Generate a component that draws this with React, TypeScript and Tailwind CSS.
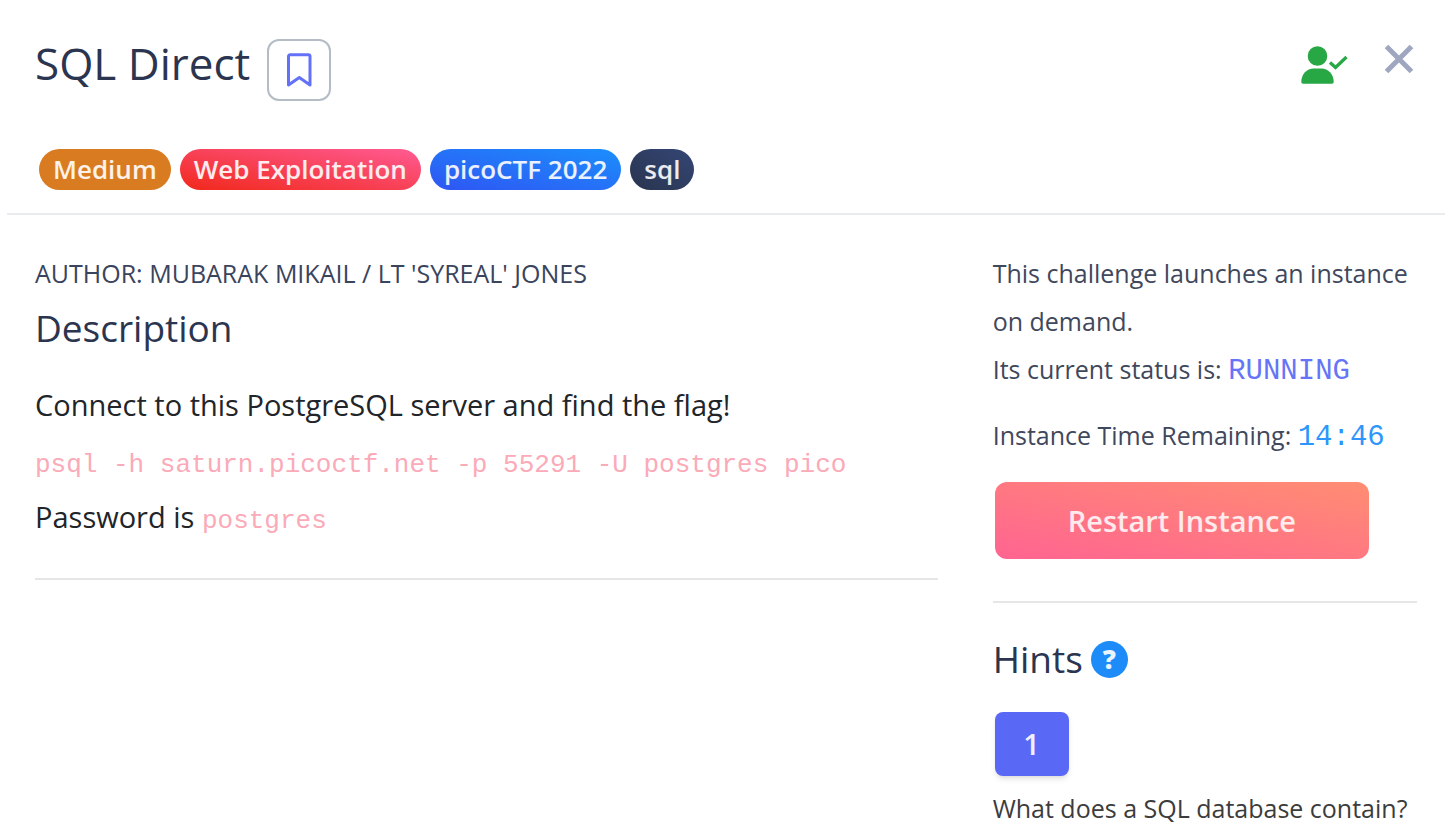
import React from "react";

const tags = [
  { label: "Medium", style: "bg-[#d97b20]" },
  { label: "Web Exploitation", style: "bg-[linear-gradient(to_top_right,#f1281b,#ff5b94)]" },
  { label: "picoCTF 2022", style: "bg-[linear-gradient(to_top_right,#2f55f3,#1b8ffc)]" },
  { label: "sql", style: "bg-[linear-gradient(to_top_right,#29344e,#344675)]" },
];

function Header() {
  return (
    <header className="border-b-2 border-[#e9ecef] px-7 pt-8 pb-[23px]">
      <div className="flex items-start justify-between">
        <div className="flex items-start gap-[17px]">
          <h1 className="text-[44px] leading-[62px] text-[#2b3550]">SQL Direct</h1>
          <button
            type="button"
            aria-label="Bookmark"
            className="mt-[7px] flex h-[62px] w-16 items-center justify-center rounded-xl border-2 border-[#b4bcc6] bg-white"
          >
            <svg width="28" height="36" viewBox="0 0 28 36" fill="none" stroke="#6371f8" strokeWidth="3" strokeLinejoin="round">
              <path d="M3.500 4.500Q3.500 2.800 5.200 2.800H23.300Q25 2.800 25 4.500V33L14.300 25.500L3.500 33Z" />
            </svg>
          </button>
        </div>
        <div className="flex items-start gap-9 pt-3 pr-[3px]">
          <svg role="img" aria-label="Solved" width="47" height="40" viewBox="0 0 47 40" className="mt-px">
            <circle cx="16.500" cy="11" r="9.800" fill="#28a745" />
            <path d="M0.300 37C0.300 29 6 23.500 12.500 23.500H20.500C27 23.500 32.700 29 32.700 37Q32.700 38.800 31 38.800H2Q0.300 38.800 0.300 37Z" fill="#28a745" />
            <path d="M29 17.500L34.500 22.500L45.500 12" fill="none" stroke="#28a745" strokeWidth="3.200" />
          </svg>
          <button type="button" aria-label="Close">
            <svg width="30" height="30" viewBox="0 0 30 30" fill="none" stroke="#9fa6bf" strokeWidth="5">
              <path d="M2.500 2.500L27.500 27.500M27.500 2.500L2.500 27.500" />
            </svg>
          </button>
        </div>
      </div>
      <ul className="mt-12 flex gap-[9px] pl-1">
        {tags.map((tag) => (
          <li key={tag.label} className={`rounded-full px-[14px] text-[26px] leading-[41px] font-semibold text-white/90 ${tag.style}`}>
            {tag.label}
          </li>
        ))}
      </ul>
    </header>
  );
}

function Code({ children }: { children: React.ReactNode }) {
  return (
    <code className="font-['Liberation_Mono',monospace] text-[26px] leading-none text-[#fbaab8]">{children}</code>
  );
}

function Details() {
  return (
    <section className="col-span-2 px-7">
      <p className="text-[25px] leading-[48px] text-[#3a445d]">AUTHOR: MUBARAK MIKAIL / LT 'SYREAL' JONES</p>
      <h2 className="mt-[7px] text-[37px] leading-[48px] text-[#2b3550]">Description</h2>
      <div className="mt-[25px] border-b-2 border-[#e6e6e6] pb-[33px] text-[29px] leading-[56px] text-[#212529]">
        <p>Connect to this PostgreSQL server and find the flag!</p>
        <p>
          <Code>psql -h saturn.picoctf.net -p 55291 -U postgres pico</Code>
        </p>
        <p>
          Password is <Code>postgres</Code>
        </p>
      </div>
    </section>
  );
}

function Sidebar() {
  return (
    <aside className="pr-7 pl-[27px] text-[25px] leading-[48px] text-[#3f485c]">
      <p>This challenge launches an instance on demand.</p>
      <p>
        Its current status is:{" "}
        <span className="font-['Liberation_Mono',monospace] text-[29px] leading-none text-[#6674f7]">RUNNING</span>
      </p>
      <p className="mt-[18px]">
        Instance Time Remaining:{" "}
        <span className="font-['Liberation_Mono',monospace] text-[29px] leading-none text-[#2e96fa]">14:46</span>
      </p>
      <button
        type="button"
        className="mt-[23px] ml-[2px] block rounded-xl bg-[linear-gradient(to_top_right,#ff6491,#ff8d72)] px-[73px] text-[29px] leading-[77px] font-semibold text-white/85"
      >
        Restart Instance
      </button>
      <hr className="mt-[42px] border-t-2 border-[#e6e6e6]" />
      <h2 className="mt-8 flex items-center gap-2 text-[37px] text-[#2b3550]">
        Hints
        <button
          type="button"
          aria-label="About hints"
          className="flex size-[37px] items-center justify-center rounded-full bg-[#1d8cf8] text-[26px] leading-none font-extrabold text-white/90"
        >
          ?
        </button>
      </h2>
      <button
        type="button"
        className="mt-[29px] ml-[2px] block w-[74px] rounded-lg bg-[#5a68f6] text-center text-[29px] leading-[64px] font-semibold text-white/90 shadow-md"
      >
        1
      </button>
      <p className="mt-2 text-[#3c3c3c]">What does a SQL database contain?</p>
    </aside>
  );
}

export default function App() {
  return (
    <main className="min-h-screen bg-white pr-[11px] pl-[7px] font-['Open_Sans',sans-serif]">
      <Header />
      <div className="grid grid-cols-3 pt-[34px]">
        <Details />
        <Sidebar />
      </div>
    </main>
  );
}
